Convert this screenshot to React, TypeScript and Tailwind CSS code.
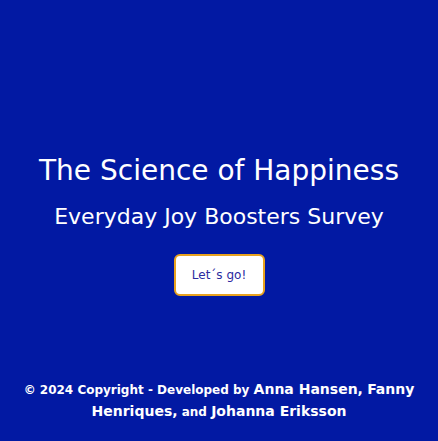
export default function App() {
  return (
    <div
      className="flex h-[441px] w-full flex-col bg-[#0219a3] text-white"
      style={{ fontFamily: '"DejaVu Sans", "Liberation Sans", sans-serif' }}
    >
      <main className="flex flex-1 flex-col items-center pt-[151px]">
        <h1 className="text-[28px] leading-[40px]">The Science of Happiness</h1>
        <h2 className="mt-[11px] text-[22px] leading-[30px]">Everyday Joy Boosters Survey</h2>
        <button className="mt-[22px] h-[42px] w-[91px] rounded-[6px] border-2 border-[#e8a21e] bg-white text-[12px] text-[#2a2aa0]">
          Let´s go!
        </button>
      </main>
      <footer className="px-3 pb-[18px] text-center text-[12px] font-bold leading-[21px]">
        © 2024 Copyright - Developed by{" "}
        <span className="inline-block text-[14px] leading-[21px]">Anna Hansen,</span>{" "}
        <span className="inline-block text-[14px] leading-[21px]">Fanny</span>{" "}
        <span className="inline-block text-[14px] leading-[21px]">Henriques,</span> and{" "}
        <span className="inline-block text-[14px] leading-[21px]">Johanna Eriksson</span>
      </footer>
    </div>
  );
}
